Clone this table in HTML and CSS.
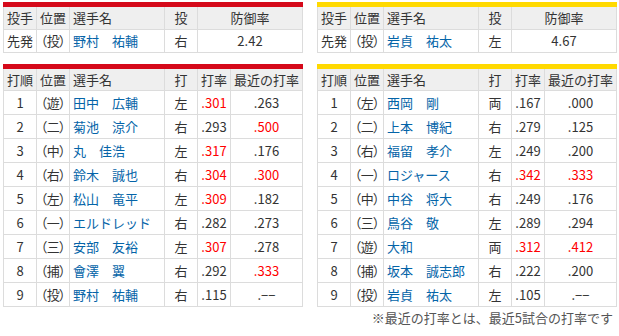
FILE: index.html
```html
<!DOCTYPE html>
<html lang="ja">
<head>
<meta charset="utf-8">
<link rel="stylesheet" href="styles.css">
</head>
<body>
<div class="page">
  <div class="cols">
    <div class="team carp">
      <table class="tbl pitcher">
        <colgroup><col class="c33"><col class="c33"><col class="c95"><col class="c33"><col></colgroup>
        <tr><th>投手</th><th>位置</th><th class="l">選手名</th><th>投</th><th>防御率</th></tr>
        <tr><td>先発</td><td class="pos">（投）</td><td class="name">野村　祐輔</td><td>右</td><td>2.42</td></tr>
      </table>
      <table class="tbl order">
        <colgroup><col class="c33"><col class="c33"><col class="c95"><col class="c33"><col class="c33"><col></colgroup>
        <tr><th>打順</th><th>位置</th><th class="l">選手名</th><th>打</th><th>打率</th><th>最近の打率</th></tr>
        <tr><td>1</td><td class="pos">（遊）</td><td class="name">田中　広輔</td><td>左</td><td class="red">.301</td><td>.263</td></tr>
        <tr><td>2</td><td class="pos">（二）</td><td class="name">菊池　涼介</td><td>右</td><td>.293</td><td class="red">.500</td></tr>
        <tr><td>3</td><td class="pos">（中）</td><td class="name">丸　佳浩</td><td>左</td><td class="red">.317</td><td>.176</td></tr>
        <tr><td>4</td><td class="pos">（右）</td><td class="name">鈴木　誠也</td><td>右</td><td class="red">.304</td><td class="red">.300</td></tr>
        <tr><td>5</td><td class="pos">（左）</td><td class="name">松山　竜平</td><td>左</td><td class="red">.309</td><td>.182</td></tr>
        <tr><td>6</td><td class="pos">（一）</td><td class="name">エルドレッド</td><td>右</td><td>.282</td><td>.273</td></tr>
        <tr><td>7</td><td class="pos">（三）</td><td class="name">安部　友裕</td><td>左</td><td class="red">.307</td><td>.278</td></tr>
        <tr><td>8</td><td class="pos">（捕）</td><td class="name">會澤　翼</td><td>右</td><td>.292</td><td class="red">.333</td></tr>
        <tr><td>9</td><td class="pos">（投）</td><td class="name">野村　祐輔</td><td>右</td><td>.115</td><td>.−−</td></tr>
      </table>
    </div>
    <div class="team tigers">
      <table class="tbl pitcher">
        <colgroup><col class="c33"><col class="c33"><col class="c95"><col class="c33"><col></colgroup>
        <tr><th>投手</th><th>位置</th><th class="l">選手名</th><th>投</th><th>防御率</th></tr>
        <tr><td>先発</td><td class="pos">（投）</td><td class="name">岩貞　祐太</td><td>左</td><td>4.67</td></tr>
      </table>
      <table class="tbl order">
        <colgroup><col class="c33"><col class="c33"><col class="c95"><col class="c33"><col class="c33"><col></colgroup>
        <tr><th>打順</th><th>位置</th><th class="l">選手名</th><th>打</th><th>打率</th><th>最近の打率</th></tr>
        <tr><td>1</td><td class="pos">（左）</td><td class="name">西岡　剛</td><td>両</td><td>.167</td><td>.000</td></tr>
        <tr><td>2</td><td class="pos">（二）</td><td class="name">上本　博紀</td><td>右</td><td>.279</td><td>.125</td></tr>
        <tr><td>3</td><td class="pos">（右）</td><td class="name">福留　孝介</td><td>左</td><td>.249</td><td>.200</td></tr>
        <tr><td>4</td><td class="pos">（一）</td><td class="name">ロジャース</td><td>右</td><td class="red">.342</td><td class="red">.333</td></tr>
        <tr><td>5</td><td class="pos">（中）</td><td class="name">中谷　将大</td><td>右</td><td>.249</td><td>.176</td></tr>
        <tr><td>6</td><td class="pos">（三）</td><td class="name">鳥谷　敬</td><td>左</td><td>.289</td><td>.294</td></tr>
        <tr><td>7</td><td class="pos">（遊）</td><td class="name">大和</td><td>両</td><td class="red">.312</td><td class="red">.412</td></tr>
        <tr><td>8</td><td class="pos">（捕）</td><td class="name">坂本　誠志郎</td><td>右</td><td>.222</td><td>.200</td></tr>
        <tr><td>9</td><td class="pos">（投）</td><td class="name">岩貞　祐太</td><td>左</td><td>.105</td><td>.−−</td></tr>
      </table>
    </div>
  </div>
  <p class="note">※最近の打率とは、最近5試合の打率です</p>
</div>
</body>
</html>
```

FILE: styles.css
```css
* { box-sizing: border-box; }
html, body { margin: 0; padding: 0; background: #fff; }
body {
  font-family: "Noto Sans CJK JP", "Liberation Sans", sans-serif;
  font-size: 13px;
  color: #333;
}
.page { padding: 2px 3px 0 3px; }
.cols {
  display: grid;
  grid-template-columns: 300px 300px;
  column-gap: 14px;
}
.team { display: flex; flex-direction: column; gap: 11px; }
.tbl {
  width: 100%;
  border-collapse: collapse;
  table-layout: fixed;
  line-height: 16px;
}
.carp .tbl { border-top: 5px solid #d5091a; }
.tigers .tbl { border-top: 5px solid #ffd900; }
.c33 { width: 33px; }
.c95 { width: 95px; }
.tbl th, .tbl td {
  border: 1px solid #dcdcdc;
  padding: 0;
  text-align: center;
  white-space: nowrap;
  font-weight: normal;
}
.tbl th { background: #efefef; height: 24px; }
.tbl td { height: 24px; }
.pitcher th { height: 25px; }
.pitcher td { height: 23px; }
.tbl th.l, .tbl td.name { text-align: left; padding-left: 3px; }
.tbl td.name { color: #0464a8; }
.tbl td.red { color: #f00; }
.tbl td.pos { font-feature-settings: "palt" 1; letter-spacing: -0.3px; }
.note {
  margin: 3px 3px 0 0;
  text-align: right;
  color: #555;
  font-size: 13px;
  line-height: 16px;
}
```
